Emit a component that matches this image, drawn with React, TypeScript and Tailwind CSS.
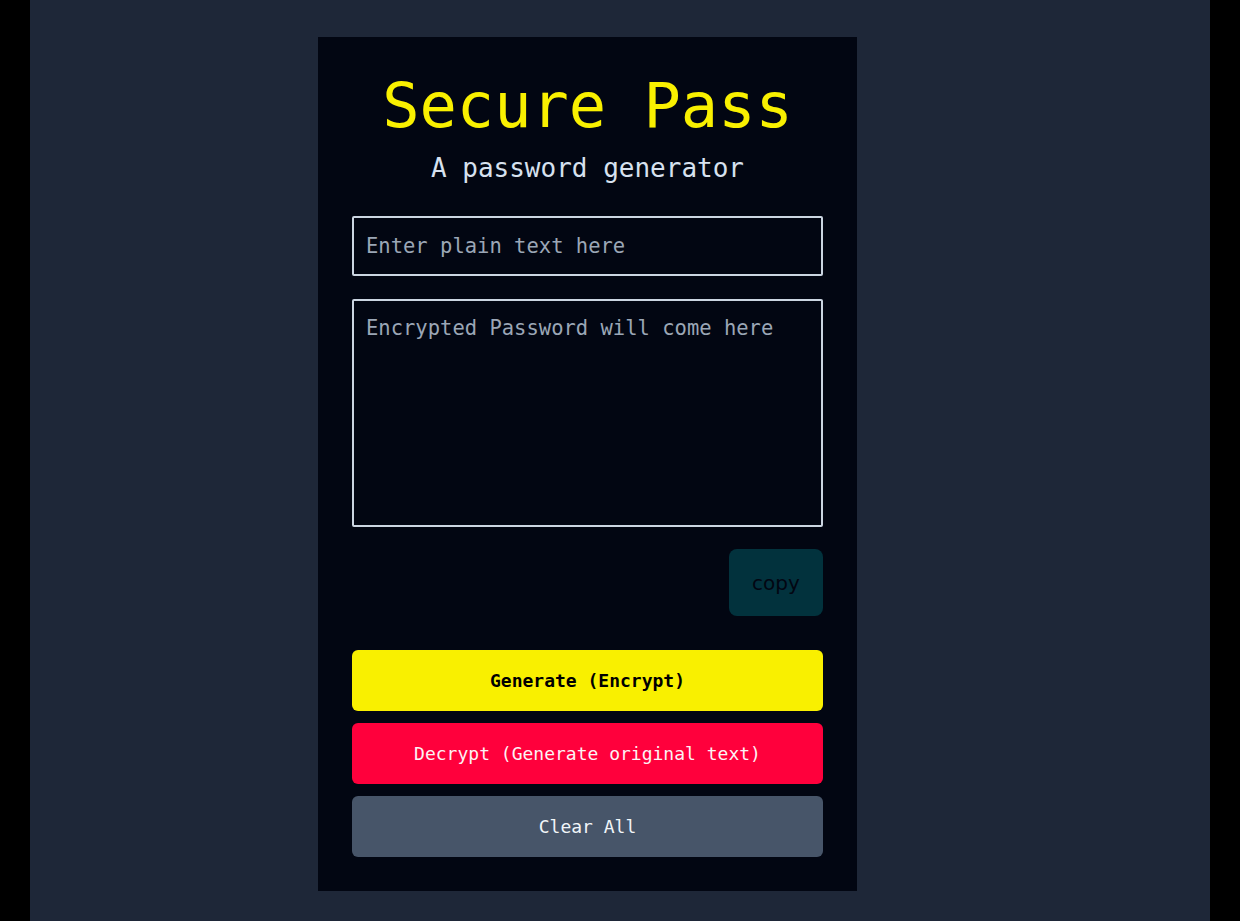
import React from "react";

export default function App() {
  return (
    <div className="w-[1240px] h-[921px] bg-black flex overflow-hidden">
      <div className="ml-[30px] w-[1180px] h-[921px] bg-[#1e2738] pt-[37px]">
        <div
          className="ml-[288px] w-[539px] h-[854px] bg-[#020612] px-[34px] pt-[38px] flex flex-col"
          style={{ fontFamily: '"DejaVu Sans Mono", monospace' }}
        >
          <h1 className="text-[62px] leading-none text-[#f9f000] text-center">Secure Pass</h1>
          <h2 className="mt-[18px] text-[26px] leading-none text-[#d7e1ef] text-center">A password generator</h2>
          <input
            className="mt-[35px] h-[60px] w-full border-2 border-[#cbd5e1] rounded-[2px] bg-transparent pl-[12px] text-[20.5px] text-[#e2e8f0] placeholder:text-[#9ba6b6] outline-none"
            style={{ fontFamily: '"DejaVu Sans Mono", monospace' }}
            placeholder="Enter plain text here"
          />
          <textarea
            className="mt-[23px] h-[228px] w-full border-2 border-[#cbd5e1] rounded-[2px] bg-transparent pl-[12px] pt-[13px] text-[20.5px] leading-[28px] text-[#e2e8f0] placeholder:text-[#9ba6b6] outline-none resize-none"
            style={{ fontFamily: '"DejaVu Sans Mono", monospace' }}
            placeholder="Encrypted Password will come here"
          />
          <div className="flex justify-end mt-[22px]">
            <button
              className="w-[94px] h-[67px] rounded-lg bg-[#02323d] text-[#020612] text-[20px]"
              style={{ fontFamily: '"DejaVu Sans", sans-serif' }}
            >
              copy
            </button>
          </div>
          <button className="mt-[34px] h-[61px] w-full rounded-md bg-[#f9f000] text-black text-[18px] font-bold">
            Generate (Encrypt)
          </button>
          <button className="mt-[12px] h-[61px] w-full rounded-md bg-[#ff003c] text-[#fdf2f4] text-[18px]">
            Decrypt (Generate original text)
          </button>
          <button className="mt-[12px] h-[61px] w-full rounded-md bg-[#475569] text-[#f1f5f9] text-[18px]">
            Clear All
          </button>
        </div>
      </div>
    </div>
  );
}
